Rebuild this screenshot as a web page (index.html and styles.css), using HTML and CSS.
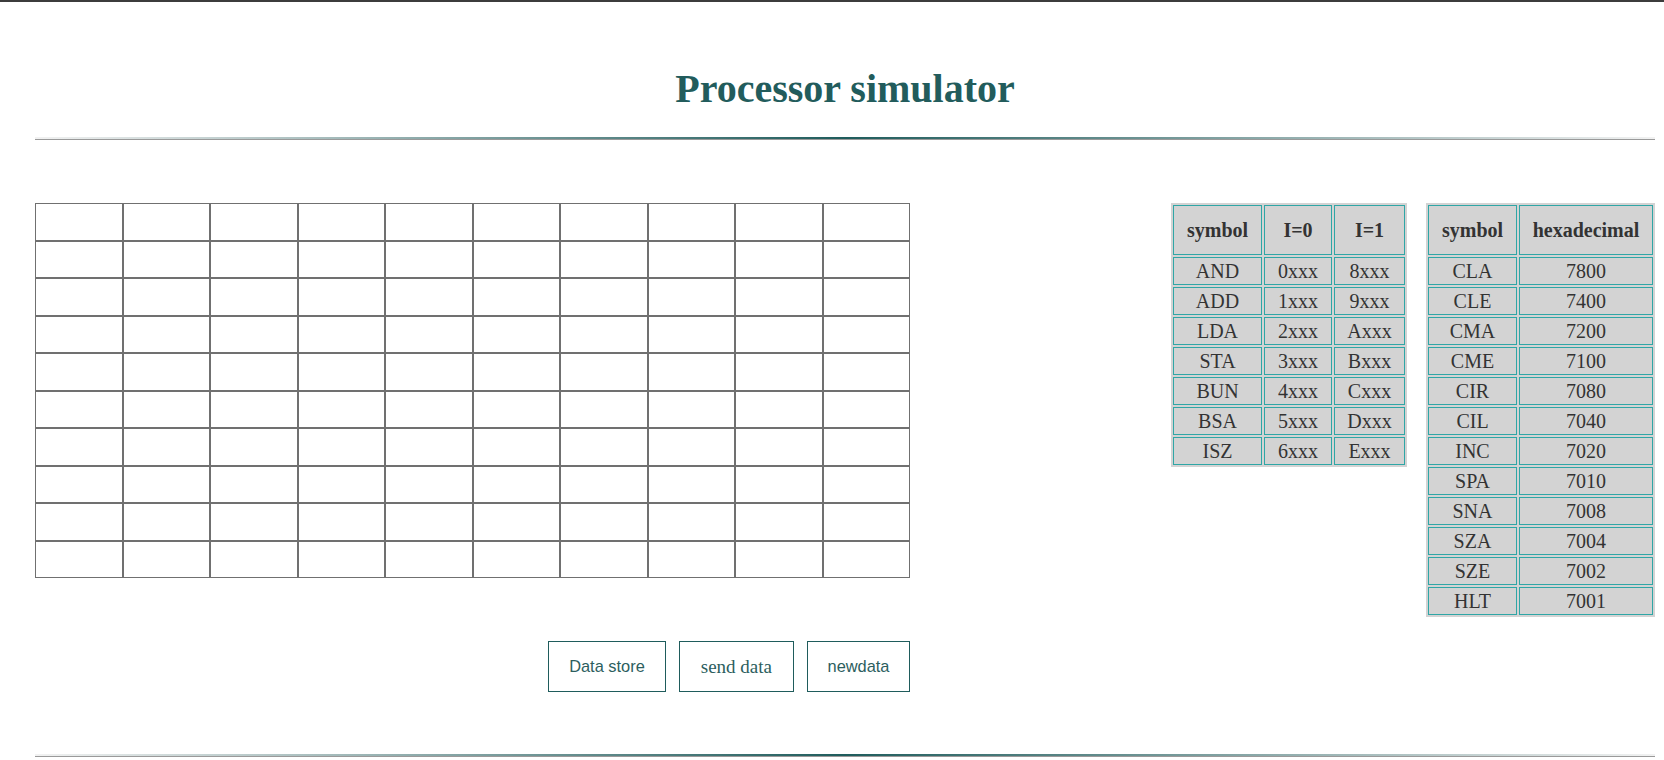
FILE: index.html
```html
<!DOCTYPE html>
<html>
<head>
<meta charset="utf-8">
<title>Processor simulator</title>
<link rel="stylesheet" href="styles.css">
</head>
<body>
<div class="page">
  <h1 class="title">Processor simulator</h1>
  <hr class="rule">
  <div class="main">
    <div class="left">
      <table class="grid">
        <tbody>
          <tr><td></td><td></td><td></td><td></td><td></td><td></td><td></td><td></td><td></td><td></td></tr>
          <tr><td></td><td></td><td></td><td></td><td></td><td></td><td></td><td></td><td></td><td></td></tr>
          <tr><td></td><td></td><td></td><td></td><td></td><td></td><td></td><td></td><td></td><td></td></tr>
          <tr><td></td><td></td><td></td><td></td><td></td><td></td><td></td><td></td><td></td><td></td></tr>
          <tr><td></td><td></td><td></td><td></td><td></td><td></td><td></td><td></td><td></td><td></td></tr>
          <tr><td></td><td></td><td></td><td></td><td></td><td></td><td></td><td></td><td></td><td></td></tr>
          <tr><td></td><td></td><td></td><td></td><td></td><td></td><td></td><td></td><td></td><td></td></tr>
          <tr><td></td><td></td><td></td><td></td><td></td><td></td><td></td><td></td><td></td><td></td></tr>
          <tr><td></td><td></td><td></td><td></td><td></td><td></td><td></td><td></td><td></td><td></td></tr>
          <tr><td></td><td></td><td></td><td></td><td></td><td></td><td></td><td></td><td></td><td></td></tr>
        </tbody>
      </table>
      <div class="buttons">
        <button class="btn btn-sans">Data store</button>
        <button class="btn btn-serif">send data</button>
        <button class="btn btn-sans btn-narrow">newdata</button>
      </div>
    </div>
    <div class="right">
      <table class="ref ref-mri">
        <thead>
          <tr><th class="c-sym">symbol</th><th class="c-i0">I=0</th><th class="c-i1">I=1</th></tr>
        </thead>
        <tbody>
          <tr><td>AND</td><td>0xxx</td><td>8xxx</td></tr>
          <tr><td>ADD</td><td>1xxx</td><td>9xxx</td></tr>
          <tr><td>LDA</td><td>2xxx</td><td>Axxx</td></tr>
          <tr><td>STA</td><td>3xxx</td><td>Bxxx</td></tr>
          <tr><td>BUN</td><td>4xxx</td><td>Cxxx</td></tr>
          <tr><td>BSA</td><td>5xxx</td><td>Dxxx</td></tr>
          <tr><td>ISZ</td><td>6xxx</td><td>Exxx</td></tr>
        </tbody>
      </table>
      <table class="ref ref-rri">
        <thead>
          <tr><th class="c-sym">symbol</th><th class="c-hex">hexadecimal</th></tr>
        </thead>
        <tbody>
          <tr><td>CLA</td><td>7800</td></tr>
          <tr><td>CLE</td><td>7400</td></tr>
          <tr><td>CMA</td><td>7200</td></tr>
          <tr><td>CME</td><td>7100</td></tr>
          <tr><td>CIR</td><td>7080</td></tr>
          <tr><td>CIL</td><td>7040</td></tr>
          <tr><td>INC</td><td>7020</td></tr>
          <tr><td>SPA</td><td>7010</td></tr>
          <tr><td>SNA</td><td>7008</td></tr>
          <tr><td>SZA</td><td>7004</td></tr>
          <tr><td>SZE</td><td>7002</td></tr>
          <tr><td>HLT</td><td>7001</td></tr>
        </tbody>
      </table>
    </div>
  </div>
  <hr class="rule rule-bottom">
</div>
</body>
</html>
```
FILE: styles.css
```css
html, body {
  margin: 0;
  padding: 0;
  background: #ffffff;
}

body {
  font-family: "Liberation Serif", "Times New Roman", serif;
  color: #333333;
}

.page {
  border-top: 2px solid #3c3c3c;
  padding: 0 9px 0 35px;
}

.title {
  margin: 0;
  padding-top: 64px;
  font-size: 40px;
  line-height: 46px;
  font-weight: bold;
  text-align: center;
  color: #225c5c;
}

.rule {
  margin: 25px 0 0 0;
  border: 0;
  height: 2px;
  border-bottom: 1px solid #9a9a9a;
  background: linear-gradient(to right, #f2f2f2, #1f5c5c, #f2f2f2);
}

.rule-bottom {
  margin-top: 62px;
}

.main {
  margin-top: 63px;
  display: flex;
  justify-content: space-between;
  align-items: flex-start;
}

.left {
  display: flex;
  flex-direction: column;
  align-items: flex-end;
}

.grid {
  border-collapse: separate;
  border-spacing: 0;
  table-layout: fixed;
  width: 875px;
}

.grid td {
  border: 1px solid #707070;
  height: 35.5px;
  padding: 0;
}

.buttons {
  margin-top: 63px;
  display: flex;
  gap: 13px;
}

.btn {
  box-sizing: border-box;
  height: 51px;
  padding: 0 20px;
  background: #ffffff;
  border: 1px solid #1f5c5c;
  border-radius: 0;
  color: #2c5e5e;
}

.buttons .btn-sans {
  font-family: "Liberation Sans", Arial, sans-serif;
  font-size: 16.4px;
  padding: 0 20px;
}

.buttons .btn-narrow {
  padding: 0 19.5px;
}

.buttons .btn-serif {
  font-family: "Liberation Serif", "Times New Roman", serif;
  font-size: 19px;
  padding: 0 21px;
}

.right {
  display: flex;
  gap: 19px;
  align-items: flex-start;
}

.ref {
  background: #d3d3d3;
  border-collapse: separate;
  border-spacing: 2px;
  table-layout: fixed;
  color: #333333;
}

.ref th,
.ref td {
  border: 1px solid #2fa6a6;
  padding: 0;
  text-align: center;
  font-size: 20px;
}

.ref th {
  height: 48px;
  font-weight: bold;
}

.ref td {
  height: 26px;
  line-height: 26px;
}

.ref-mri { width: 236px; }
.ref-mri .c-sym { width: 87px; }
.ref-mri .c-i0 { width: 66px; }
.ref-mri .c-i1 { width: 69px; }

.ref-rri { width: 229px; }
.ref-rri .c-sym { width: 87px; }
.ref-rri .c-hex { width: 132px; }
```
